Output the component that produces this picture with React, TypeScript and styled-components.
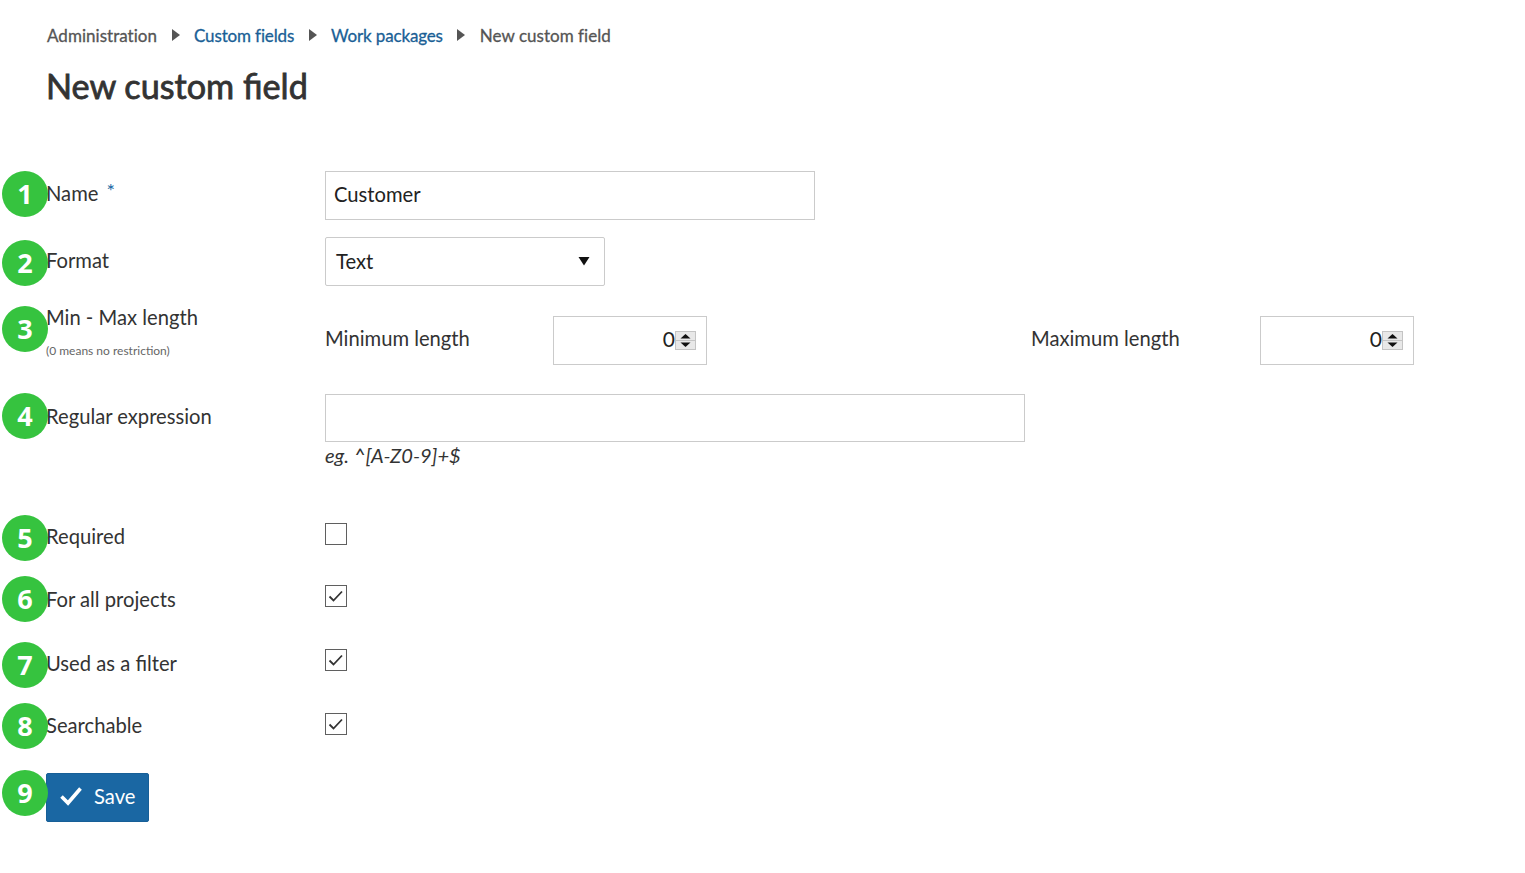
import styled, { createGlobalStyle } from 'styled-components';

const GlobalStyle = createGlobalStyle`
  html, body {
    margin: 0;
    padding: 0;
    background: #fff;
  }
  body {
    font-family: Lato, "Open Sans", sans-serif;
    color: #333;
  }
`;

const Page = styled.div`
  padding: 23px 0 0 46px;
  width: 1479px;
  box-sizing: border-box;
`;

const Breadcrumbs = styled.nav`
  display: flex;
  align-items: center;
  height: 24px;
  padding-left: 1px;
  font-size: 17px;
  color: #555;
  -webkit-text-stroke: 0.3px;
`;

const Crumb = styled.span<{ $link?: boolean }>`
  color: ${({ $link }) => ($link ? '#1a5f96' : '#555')};
  letter-spacing: ${({ $link }) => ($link ? '-0.15px' : '0.03px')};
`;

const CrumbArrow = styled.span`
  width: 0;
  height: 0;
  margin: 0 14.5px;
  border-left: 8px solid #555;
  border-top: 6.5px solid transparent;
  border-bottom: 6.5px solid transparent;
`;

const Title = styled.h1`
  margin: 19px 0 0;
  height: 39px;
  line-height: 39px;
  font-size: 34.2px;
  font-weight: 400;
  color: #333;
  -webkit-text-stroke: 0.8px;
`;

const Form = styled.form`
  margin-top: 66px;
`;

const Row = styled.div<{ $height: number }>`
  position: relative;
  display: grid;
  grid-template-columns: 279px 1fr;
  height: ${({ $height }) => $height}px;
`;

const Badge = styled.span<{ $top: number }>`
  position: absolute;
  left: -44px;
  top: ${({ $top }) => $top}px;
  box-sizing: border-box;
  width: 46px;
  height: 46px;
  padding-bottom: 2px;
  border-radius: 50%;
  background: #36c33f;
  color: #fff;
  display: flex;
  align-items: center;
  justify-content: center;
  font-family: "Open Sans", sans-serif;
  font-size: 27px;
  font-weight: 700;
`;

const Label = styled.label<{ $offset: number }>`
  display: block;
  padding-top: ${({ $offset }) => $offset}px;
  font-size: 20.2px;
  line-height: 25px;
  color: #333;
`;

const Required = styled.span`
  margin-left: 8px;
  color: #1a67a3;
  font-size: 20px;
  line-height: 0;
  vertical-align: 3px;
`;

const Note = styled.small`
  display: block;
  margin-top: 14px;
  font-size: 12px;
  line-height: 14px;
  color: #666;
`;

const TextInput = styled.input<{ $width: number; $height: number }>`
  display: block;
  box-sizing: border-box;
  width: ${({ $width }) => $width}px;
  height: ${({ $height }) => $height}px;
  padding: 0 8px 4px;
  border: 1px solid #cbcbcb;
  border-radius: 0;
  outline: none;
  background: #fff;
  font-family: inherit;
  font-size: 20.2px;
  color: #222;
`;

const SelectBox = styled.div`
  box-sizing: border-box;
  width: 280px;
  height: 49px;
  padding: 0 14px 2px 10px;
  display: flex;
  align-items: center;
  justify-content: space-between;
  border: 1px solid #cbcbcb;
  border-radius: 2px;
  font-size: 20.2px;
  color: #222;
`;

const LengthFields = styled.div`
  display: grid;
  grid-template-columns: 228px 154px 324px 229px 154px;
  align-items: center;
  padding-top: 12px;
  height: 49px;
`;

const LengthLabel = styled.span`
  font-size: 20.2px;
  color: #333;
  margin-top: -5px;
`;

const NumberBox = styled.div`
  box-sizing: border-box;
  height: 49px;
  padding: 0 10px 0 0;
  display: flex;
  align-items: center;
  justify-content: flex-end;
  border: 1px solid #cbcbcb;
  font-size: 21px;
  color: #222;
  line-height: 1;
`;

const Zero = styled.span`
  margin-top: -4px;
`;

const Spinner = styled.svg`
  display: block;
`;

const Hint = styled.em`
  display: block;
  margin-top: 0;
  font-size: 20.1px;
  line-height: 26px;
  color: #333;
`;

const CheckCell = styled.div``;

const CheckBox = styled.span`
  box-sizing: border-box;
  display: flex;
  align-items: center;
  justify-content: center;
  width: 22px;
  height: 22px;
  border: 1px solid #5f5f5f;
  background: #fff;
`;

const SaveButton = styled.button`
  box-sizing: border-box;
  width: 103px;
  height: 49px;
  padding: 0 0 0 13px;
  display: flex;
  align-items: center;
  gap: 12px;
  border: 1px solid #175f97;
  border-radius: 2px;
  background: #1a67a3;
  color: #fff;
  font-family: inherit;
  font-size: 20.2px;
`;

const SaveIcon = styled.svg`
  display: block;
  margin-top: -3px;
`;

const SaveText = styled.span`
  margin-top: -3px;
`;

const Checked = ({ on }: { on: boolean }) => (
  <CheckBox>
    {on && (
      <svg width="16" height="14" viewBox="0 0 16 14" fill="none">
        <path d="M1.5 7.5 L5.5 11.5 L14 2.5" stroke="#333" strokeWidth="1.8" />
      </svg>
    )}
  </CheckBox>
);

const Spin = () => (
  <Spinner width="21" height="19" viewBox="0 0 21 19">
    <rect x="0.5" y="0.5" width="20" height="18" fill="#e8e8e8" stroke="#c4c4c4" />
    <line x1="0" y1="9.5" x2="21" y2="9.5" stroke="#c4c4c4" />
    <path d="M10.5 3 L15.5 7.5 H5.5 Z" fill="#111" />
    <path d="M5.5 11.5 H15.5 L10.5 16 Z" fill="#111" />
  </Spinner>
);

const flags = [
  { label: 'Required', checked: false, height: 62, labelOffset: 1, badge: -8 },
  { label: 'For all projects', checked: true, height: 64, labelOffset: 2, badge: -9 },
  { label: 'Used as a filter', checked: true, height: 64, labelOffset: 2, badge: -7 },
  { label: 'Searchable', checked: true, height: 60, labelOffset: 0, badge: -10 },
];

export default function App() {
  return (
    <>
      <GlobalStyle />
      <Page>
        <Breadcrumbs>
          <Crumb>Administration</Crumb>
          <CrumbArrow />
          <Crumb $link>Custom fields</Crumb>
          <CrumbArrow />
          <Crumb $link>Work packages</Crumb>
          <CrumbArrow />
          <Crumb>New custom field</Crumb>
        </Breadcrumbs>
        <Title>New custom field</Title>
        <Form>
          <Row $height={66}>
            <Badge $top={0}>1</Badge>
            <Label $offset={10}>
              Name<Required>*</Required>
            </Label>
            <TextInput $width={490} $height={49} defaultValue="Customer" />
          </Row>
          <Row $height={67}>
            <Badge $top={3}>2</Badge>
            <Label $offset={11}>Format</Label>
            <SelectBox>
              Text
              <svg width="12" height="10" viewBox="0 0 12 10">
                <path d="M0.5 1 H11.5 L6 9.5 Z" fill="#111" />
              </svg>
            </SelectBox>
          </Row>
          <Row $height={90}>
            <Badge $top={2}>3</Badge>
            <Label $offset={1}>
              Min - Max length
              <Note>(0 means no restriction)</Note>
            </Label>
            <LengthFields>
              <LengthLabel>Minimum length</LengthLabel>
              <NumberBox>
                <Zero>0</Zero>
                <Spin />
              </NumberBox>
              <span />
              <LengthLabel>Maximum length</LengthLabel>
              <NumberBox>
                <Zero>0</Zero>
                <Spin />
              </NumberBox>
            </LengthFields>
          </Row>
          <Row $height={129}>
            <Badge $top={-1}>4</Badge>
            <Label $offset={10}>Regular expression</Label>
            <div>
              <TextInput $width={700} $height={48} />
              <Hint>eg. ^[A-Z0-9]+$</Hint>
            </div>
          </Row>
          {flags.map((flag, i) => (
            <Row key={flag.label} $height={flag.height}>
              <Badge $top={flag.badge}>{i + 5}</Badge>
              <Label $offset={flag.labelOffset}>{flag.label}</Label>
              <CheckCell>
                <Checked on={flag.checked} />
              </CheckCell>
            </Row>
          ))}
          <Row $height={49}>
            <Badge $top={-3}>9</Badge>
            <SaveButton type="button">
              <SaveIcon width="22" height="20" viewBox="0 0 22 20" fill="none">
                <path d="M1.5 10.5 L8 17 L20.5 2.5" stroke="#fff" strokeWidth="3.6" />
              </SaveIcon>
              <SaveText>Save</SaveText>
            </SaveButton>
          </Row>
        </Form>
      </Page>
    </>
  );
}
